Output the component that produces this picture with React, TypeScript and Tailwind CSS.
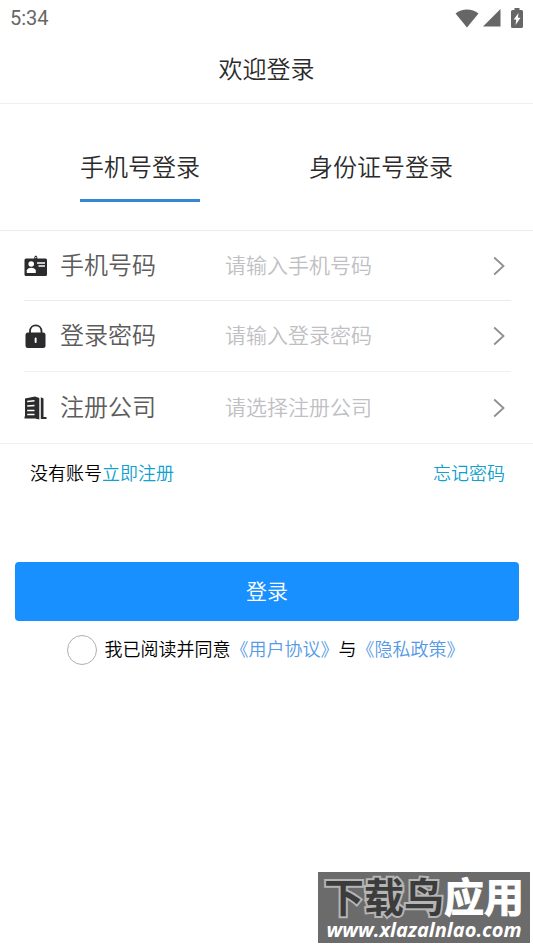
import { useState } from 'react';

type LoginType = 'phone' | 'idcard';

const companies = ['总公司', '分公司'];

// Icons

const WifiIcon = () => (
    <svg width="24" height="19" viewBox="0 0 24 19" fill="#666" aria-hidden="true">
        <path d="M12 18.5 L0.5 4.5 C7 -0.8 17 -0.8 23.5 4.5 Z" />
    </svg>
);

const SignalIcon = () => (
    <svg width="18" height="18" viewBox="0 0 18 18" fill="#666" aria-hidden="true">
        <path d="M17.5 0 V17.5 H0 Z" />
    </svg>
);

const BatteryIcon = () => (
    <svg width="12" height="20" viewBox="0 0 12 20" aria-hidden="true">
        <path d="M3.5 0 H8.5 V2 H10.5 Q12 2 12 3.5 V18.5 Q12 20 10.5 20 H1.5 Q0 20 0 18.5 V3.5 Q0 2 1.5 2 H3.5 Z" fill="#666" />
        <path d="M7.5 5 L2.7 11.5 H5.3 L4.5 17 L9.5 9.8 H7 Z" fill="#fff" />
    </svg>
);

const CardIcon = () => (
    <svg width="24" height="24" viewBox="0 0 24 24" aria-hidden="true">
        <rect x="0.5" y="4.5" width="22.5" height="17.5" rx="1.5" fill="#2b2b2e" />
        <path d="M10.3 5.5 V3 Q11.8 0 13.3 3 V5.5 Z" fill="#2b2b2e" />
        <circle cx="11.8" cy="3.6" r="0.7" fill="#fff" />
        <circle cx="7.2" cy="10" r="2.8" fill="#fff" />
        <path d="M2.8 19 V16.2 C4 14.6 5 13.8 7.2 13.8 C9.4 13.8 10.6 14.6 11.8 16.2 V19 Z" fill="#fff" />
        <path d="M13 9 H21 M14.5 12 H21" stroke="#fff" strokeWidth="1.3" />
    </svg>
);

const LockIcon = () => (
    <svg width="24" height="24" viewBox="0 0 24 24" aria-hidden="true">
        <path d="M6 11 V7.5 C6 -0.8 17.5 -0.8 17.5 7.5 V11" fill="none" stroke="#2b2b2e" strokeWidth="1.8" />
        <rect x="1.5" y="8.5" width="20" height="15.5" rx="2.5" fill="#2b2b2e" />
        <rect x="10.7" y="13.5" width="1.9" height="5.5" rx="0.9" fill="#fff" />
    </svg>
);

const CompanyIcon = () => (
    <svg width="24" height="24" viewBox="0 0 24 24" aria-hidden="true">
        <path d="M1 2.5 L11 0.5 L15.3 2 V23.5 L11 22.5 H0.5 V20.5 H1 Z" fill="#2b2b2e" />
        <path d="M3.2 5.6 L10.5 4.8 M3.2 10 L10.5 9.5 M3.2 14.4 H10.5 M3.2 18.6 H10.5" stroke="#fff" strokeWidth="1.5" />
        <path d="M16.8 1.2 L19.5 2.5 V21 H22.5 V23 H16.8 Z" fill="#2b2b2e" />
    </svg>
);

const ArrowIcon = () => (
    <svg className="shrink-0" width="12" height="20" viewBox="0 0 12 20" fill="none" stroke="#8f8f8f" strokeWidth="1.8" aria-hidden="true">
        <path d="M1.2 1.5 L10.5 10 L1.2 18.5" />
    </svg>
);

const App: React.FC = () => {
    const [loginType, setLoginType] = useState<LoginType>('phone');
    const [account, setAccount] = useState('');
    const [password, setPassword] = useState('');
    const [company, setCompany] = useState('');
    const [agreed, setAgreed] = useState(false);

    const rowClass = 'flex items-center mr-5.5 pr-1.5';
    const labelClass = 'w-[165px] ml-3 text-2xl text-[#5c5c5c]';
    const fieldClass = 'flex-1 min-w-0 h-12 bg-transparent text-[21px] text-[#333] placeholder:text-[#c0c0c4] focus:outline-none';

    return (
        <div className="flex flex-col min-h-screen bg-white text-black font-[350] font-['Liberation_Sans','Noto_Sans_CJK_SC',sans-serif]">

            {/* Status bar */}
            <div className="flex items-center justify-between h-9 px-2.5">
                <span className="font-[Roboto,sans-serif] font-normal text-xl text-[#666]">5:34</span>
                <div className="flex items-center gap-1">
                    <WifiIcon />
                    <SignalIcon />
                    <span className="pl-1.5"><BatteryIcon /></span>
                </div>
            </div>

            <header className="flex items-center justify-center h-17 border-b border-[#f0f0f0]">
                <h1 className="text-2xl text-[#2b2b2b]">欢迎登录</h1>
            </header>

            {/* Tabs */}
            <div className="flex justify-between px-20 pt-12 pb-7 border-b border-[#ececec] text-2xl text-[#2b2b2b]">
                <button
                    className={`pb-[15px] border-b-3 cursor-pointer ${loginType === 'phone' ? 'border-[#3488d3]' : 'border-transparent'}`}
                    onClick={() => setLoginType('phone')}>
                    手机号登录
                </button>
                <button
                    className={`pb-[15px] border-b-3 cursor-pointer ${loginType === 'idcard' ? 'border-[#3488d3]' : 'border-transparent'}`}
                    onClick={() => setLoginType('idcard')}>
                    身份证号登录
                </button>
            </div>

            {/* Form */}
            <form onSubmit={(e) => e.preventDefault()}>
                <div className="pl-6 border-b border-[#f0f0f0]">
                    <div className={`${rowClass} h-[70px] border-b border-[#ebebeb]`}>
                        <CardIcon />
                        <label htmlFor="account" className={labelClass}>手机号码</label>
                        <input id="account" type="text" placeholder="请输入手机号码" className={fieldClass}
                            value={account} onChange={(e) => setAccount(e.target.value)} />
                        <ArrowIcon />
                    </div>
                    <div className={`${rowClass} h-[71px] border-b border-[#f0f0f0]`}>
                        <LockIcon />
                        <label htmlFor="password" className={labelClass}>登录密码</label>
                        <input id="password" type="password" placeholder="请输入登录密码" className={fieldClass}
                            value={password} onChange={(e) => setPassword(e.target.value)} />
                        <ArrowIcon />
                    </div>
                    <div className={`${rowClass} h-[71px]`}>
                        <CompanyIcon />
                        <label htmlFor="company" className={labelClass}>注册公司</label>
                        <select id="company"
                            className={`flex-1 min-w-0 h-12 appearance-none bg-transparent text-[21px] focus:outline-none ${company ? 'text-[#333]' : 'text-[#c0c0c4]'}`}
                            value={company} onChange={(e) => setCompany(e.target.value)}>
                            <option value="" disabled>请选择注册公司</option>
                            {companies.map((name) => <option key={name} value={name}>{name}</option>)}
                        </select>
                        <ArrowIcon />
                    </div>
                </div>

                <div className="flex justify-between pt-4 pl-7.5 pr-7 text-lg">
                    <p>没有账号<a href="#register" className="text-[#12a0cc]">立即注册</a></p>
                    <a href="#forgot" className="text-[#12a0cc]">忘记密码</a>
                </div>

                <div className="pl-[15px] pr-3.5 pt-[74px]">
                    <button type="submit" className="w-full h-[59px] rounded bg-[#1890ff] text-[21px] text-white cursor-pointer">登录</button>
                </div>

                <div className="flex items-center justify-center pt-3.5 pr-0.5 text-lg">
                    <input id="agree" type="checkbox"
                        className="size-[30px] mr-2 shrink-0 appearance-none rounded-full border border-[#b0b0b0] checked:bg-[#1890ff] checked:border-[#1890ff]"
                        checked={agreed} onChange={(e) => setAgreed(e.target.checked)} />
                    <label htmlFor="agree">我已阅读并同意</label>
                    <a href="#terms" className="text-[#559ae6]">《用户协议》</a>
                    <span>与</span>
                    <a href="#privacy" className="text-[#559ae6]">《隐私政策》</a>
                </div>
            </form>

            {/* Download site badge */}
            <div className="flex flex-col items-center self-end w-[212px] h-[71px] mt-auto mr-[3px] mb-1 pt-1.5 bg-[#6b6b6b]">
                <span className="text-[40px] leading-10 font-bold text-white whitespace-nowrap">
                    <span className="text-[#3c3c3c] [paint-order:stroke_fill] [-webkit-text-stroke:4px_#b5b5b5]">下载鸟</span>
                    <span className="[-webkit-text-stroke:1px_#fff]">应用</span>
                </span>
                <span className="font-['Open_Sans',sans-serif] text-xl leading-6 font-bold italic text-white">www.xlazalnlao.com</span>
            </div>
        </div>
    );
};

export default App;
